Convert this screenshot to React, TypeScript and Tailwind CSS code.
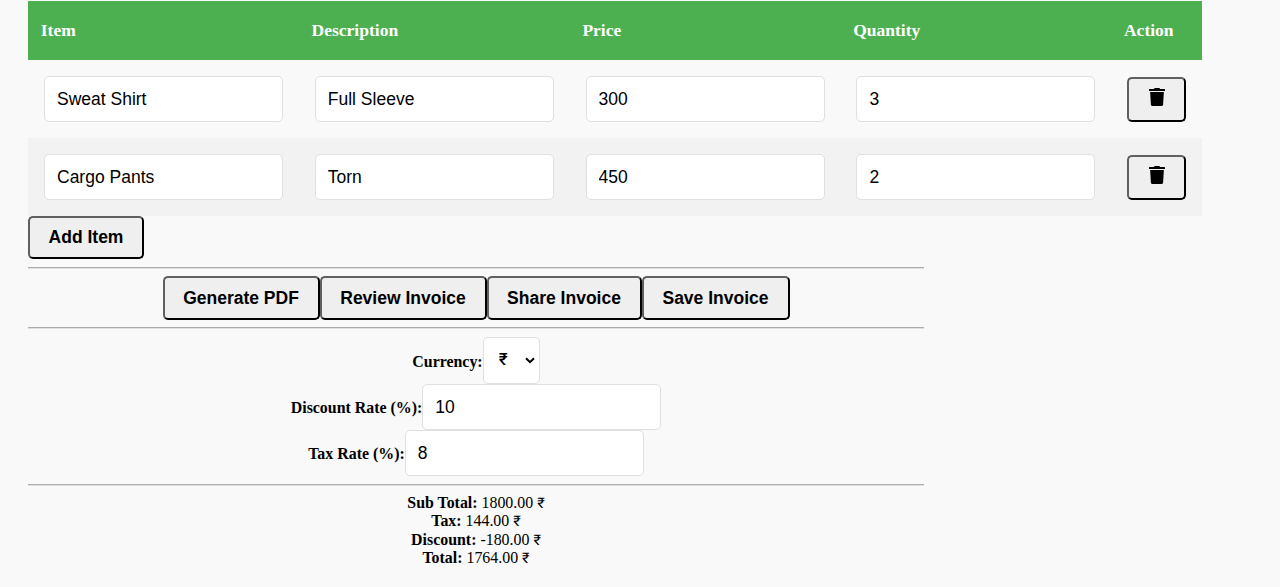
import { useState } from "react";

type Item = { name: string; description: string; price: string; quantity: string };

const fieldClass =
  "block h-[46px] w-[239px] rounded-[5px] border border-[#e0e0e0] bg-white pl-3 font-['Liberation_Sans',sans-serif] text-[17.5px] text-black outline-none";

const buttonClass =
  "shrink-0 rounded-[5px] border-2 border-t-[#606060] border-l-[#606060] border-r-black border-b-black bg-[#efefef] text-center font-['Liberation_Sans',sans-serif] text-[17.5px] leading-5 font-bold text-black";

function TrashIcon() {
  return (
    <svg width="16" height="18" viewBox="0 0 16 18" fill="currentColor" aria-hidden="true">
      <path d="M5.600 0h4.800l.7 1H15.500q.5 0 .5.5v1q0 .5-.5.5H.5Q0 3 0 2.500v-1Q0 1 .5 1h4.400z" />
      <path d="M1.100 4h13.800l-.8 12.500q-.1 1.500-1.600 1.500h-9q-1.500 0-1.600-1.500z" />
    </svg>
  );
}

function Rule() {
  return <div className="h-[2px] w-[896px] border-t border-b border-t-[#adadad] border-b-[#e0e0e0]" />;
}

function Amount({ label, value }: { label: string; value: string }) {
  return (
    <p>
      <b>{label}</b> {value} <span className="font-['Roboto',sans-serif] text-[14.5px] leading-none">₹</span>
    </p>
  );
}

export default function App() {
  const [items, setItems] = useState<Item[]>([
    { name: "Sweat Shirt", description: "Full Sleeve", price: "300", quantity: "3" },
    { name: "Cargo Pants", description: "Torn", price: "450", quantity: "2" },
  ]);
  const [discount, setDiscount] = useState("10");
  const [tax, setTax] = useState("8");

  const update = (row: number, key: keyof Item, value: string) =>
    setItems(items.map((item, i) => (i === row ? { ...item, [key]: value } : item)));

  const subTotal = items.reduce((sum, item) => sum + Number(item.price) * Number(item.quantity), 0);
  const taxAmount = (subTotal * Number(tax)) / 100;
  const discountAmount = (subTotal * Number(discount)) / 100;
  const keys: (keyof Item)[] = ["name", "description", "price", "quantity"];

  return (
    <div className="h-[587px] overflow-hidden bg-[#f9f9f9] pt-px pl-7 font-['Liberation_Serif','Noto_Sans',serif] text-black">
      <div className="w-[1174px]">
        <div className="grid h-[59px] grid-cols-[270.8px_270.8px_270.8px_270.8px_1fr] items-center bg-[#4caf50] text-[17.5px] font-bold text-white">
          {["Item", "Description", "Price", "Quantity", "Action"].map((title) => (
            <div key={title} className="pl-[12.8px]">
              {title}
            </div>
          ))}
        </div>
        {items.map((item, row) => (
          <div
            key={row}
            className="grid h-[78px] grid-cols-[270.8px_270.8px_270.8px_270.8px_1fr] items-center even:bg-[#f9f9f9] odd:bg-[#f2f2f2]"
          >
            {keys.map((key) => (
              <div key={key} className="pl-4">
                <input className={fieldClass} value={item[key]} onChange={(e) => update(row, key, e.target.value)} />
              </div>
            ))}
            <div className="pl-4">
              <button
                className={`${buttonClass} flex h-[45px] w-[59px] justify-center pt-[9px]`}
                aria-label="Delete"
                onClick={() => setItems(items.filter((_, i) => i !== row))}
              >
                <TrashIcon />
              </button>
            </div>
          </div>
        ))}
      </div>
      <div className="flex w-[896px] flex-col">
        <button
          className={`${buttonClass} mb-2 h-[43px] w-[116px] pb-px`}
          onClick={() => setItems([...items, { name: "", description: "", price: "0", quantity: "1" }])}
        >
          Add Item
        </button>
        <Rule />
        <div className="mt-[7px] mb-[7px] flex h-11 justify-center">
          <button className={`${buttonClass} w-[157px]`}>Generate PDF</button>
          <button className={`${buttonClass} w-[167px]`}>Review Invoice</button>
          <button className={`${buttonClass} w-[155px]`}>Share Invoice</button>
          <button className={`${buttonClass} w-[148px]`}>Save Invoice</button>
        </div>
        <Rule />
        <div className="mt-2 flex flex-col items-center text-[15.9px] font-bold">
          <div className="flex h-[47px] items-center">
            <label className="pt-[2px]">Currency:</label>
            <div className="flex h-[47px] w-[57px] items-center rounded-[5px] border border-[#e0e0e0] bg-white pl-[15px] font-['Roboto',sans-serif] text-[17px] font-medium">
              <span className="w-[26px] pb-px">₹</span>
              <svg width="10" height="7" viewBox="0 0 10 7" fill="none" stroke="currentColor" strokeWidth="2">
                <path d="M1 1.200 5 5.200l4-4" />
              </svg>
            </div>
          </div>
          <div className="flex h-[46px] items-center">
            <label className="pt-[2px]">Discount Rate (%):</label>
            <input className={`${fieldClass} font-normal`} value={discount} onChange={(e) => setDiscount(e.target.value)} />
          </div>
          <div className="flex h-[46px] items-center">
            <label className="pt-[2px]">Tax Rate (%):</label>
            <input className={`${fieldClass} font-normal`} value={tax} onChange={(e) => setTax(e.target.value)} />
          </div>
        </div>
        <div className="mt-2">
          <Rule />
        </div>
        <div className="mt-2 text-center text-[15.9px] leading-[18.4px]">
          <Amount label="Sub Total:" value={subTotal.toFixed(2)} />
          <Amount label="Tax:" value={taxAmount.toFixed(2)} />
          <Amount label="Discount:" value={(-discountAmount).toFixed(2)} />
          <Amount label="Total:" value={(subTotal + taxAmount - discountAmount).toFixed(2)} />
        </div>
      </div>
    </div>
  );
}
